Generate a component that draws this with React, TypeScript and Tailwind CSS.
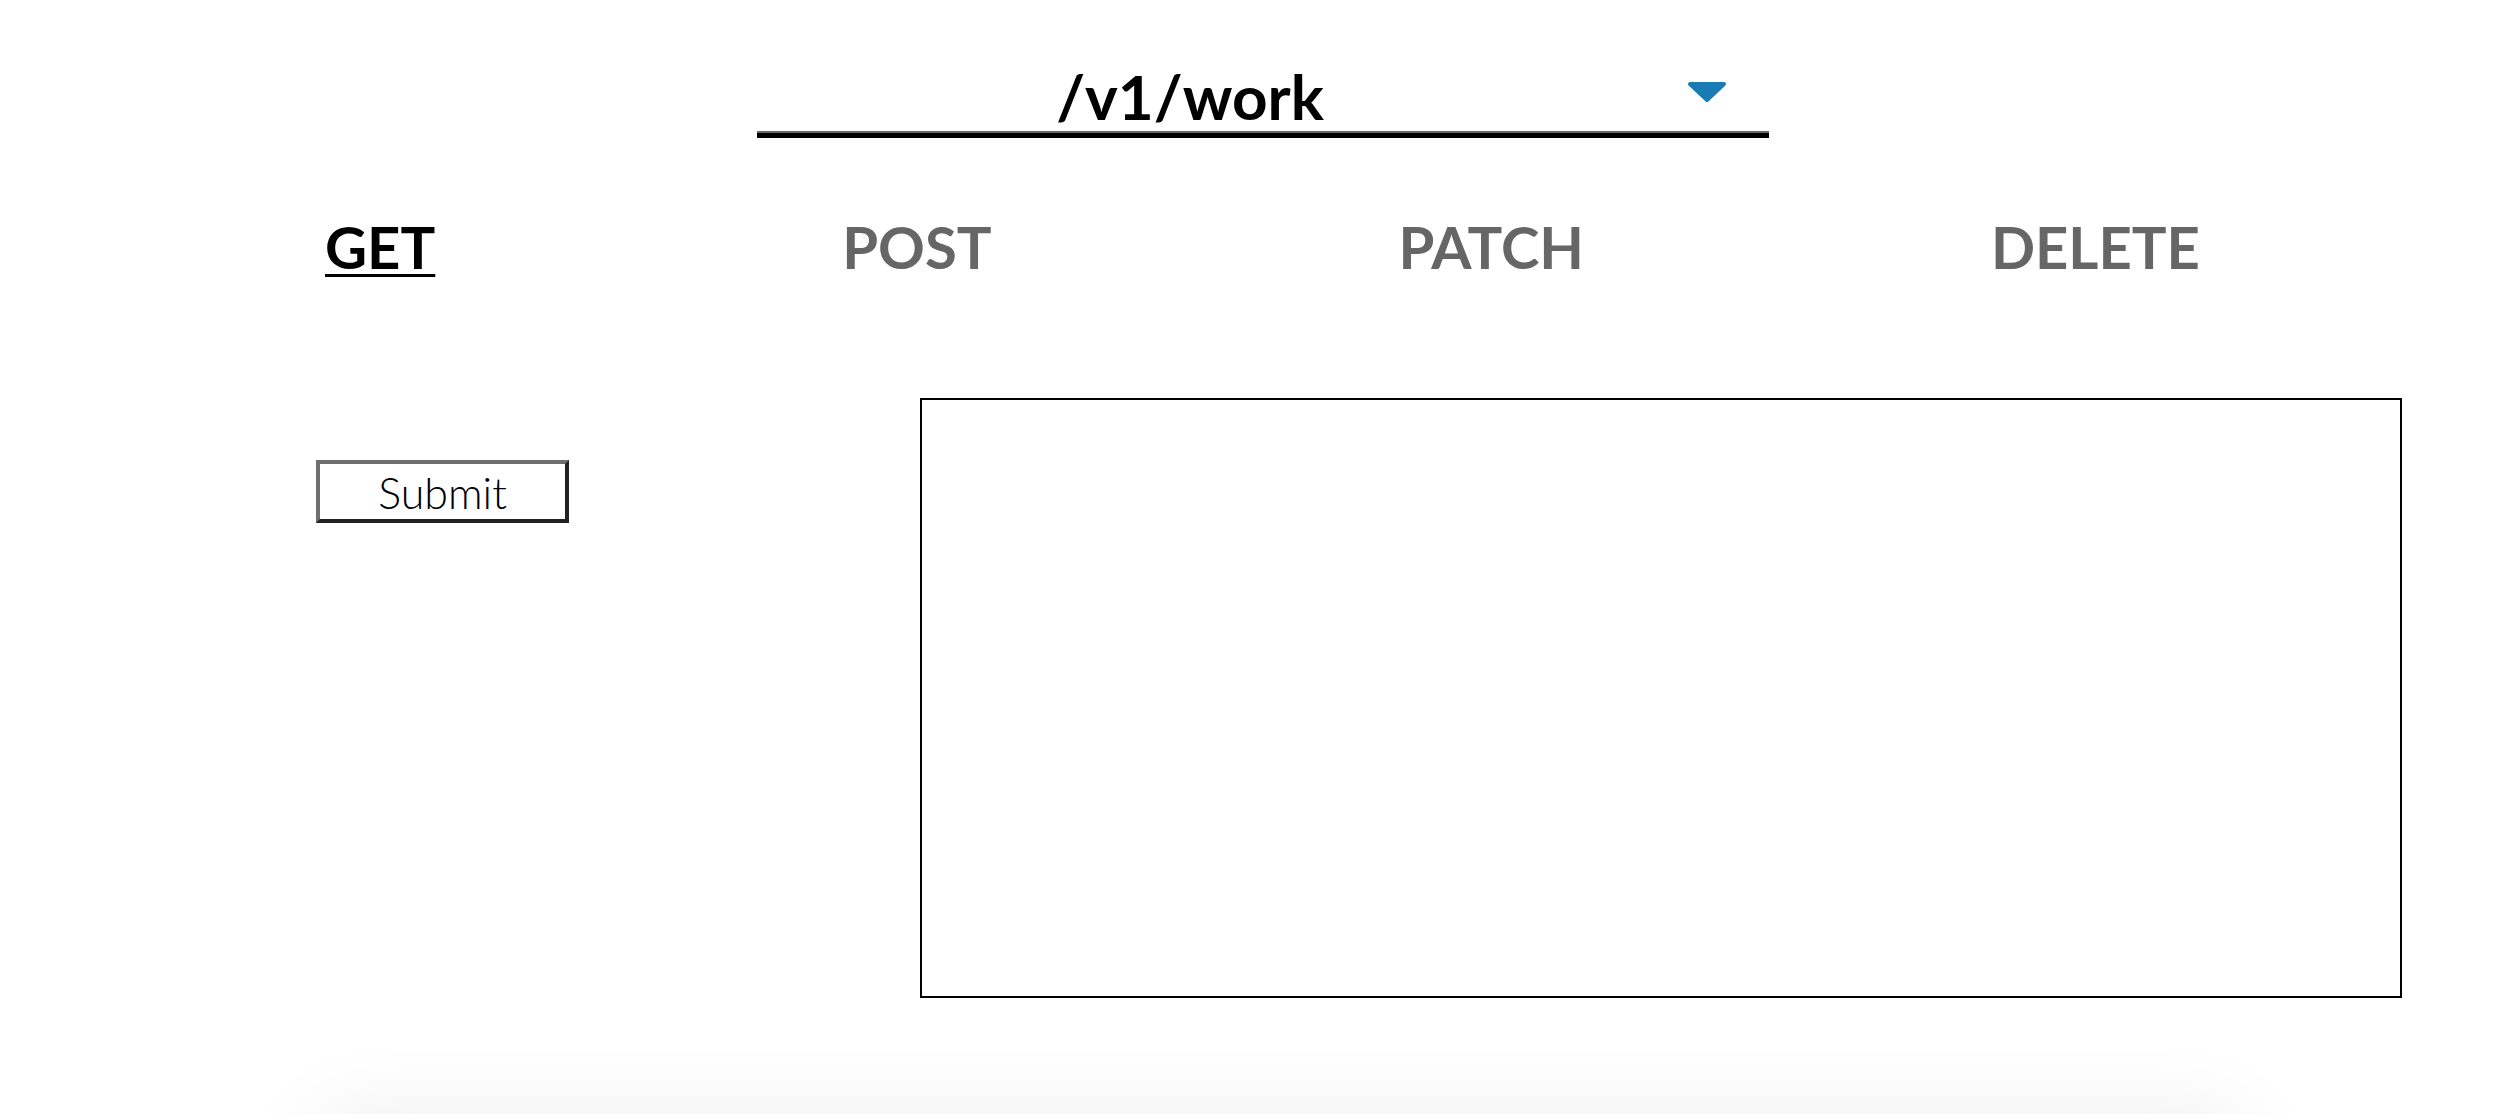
import React from 'react'

const methods = ['GET', 'POST', 'PATCH', 'DELETE']

function CaretDown() {
  return (
    <svg width="40" height="22" viewBox="0 0 40 22" fill="#187bb3">
      <polygon points="3,3 37,3 20,19" stroke="#187bb3" strokeWidth="4" strokeLinejoin="round" />
    </svg>
  )
}

export default function App() {
  const active = 'GET'

  return (
    <div className="relative h-[1114px] overflow-hidden bg-white font-['Lato',sans-serif]">
      {/* endpoint picker */}
      <div className="relative ml-[757px] mt-[66px] w-[1012px]">
        <div className="h-[64px] pr-[146px] text-center text-[62px] font-bold leading-[60px] text-black">/v1/work</div>
        <div className="mt-[1px] h-[2px] bg-[#6a6a6a]" />
        <div className="h-[5px] bg-black" />
        <div className="absolute right-[42px] top-[15px]">
          <CaretDown />
        </div>
      </div>

      {/* method tabs */}
      <div className="ml-[325px] mt-[80px] flex w-[1875px] justify-between">
        {methods.map((m) => (
          <span
            key={m}
            className={
              m === active
                ? 'text-[58px] font-bold leading-none text-black underline decoration-[3px] underline-offset-[5px]'
                : 'text-[58px] font-bold leading-none text-[#666666]'
            }
          >
            {m}
          </span>
        ))}
      </div>

      {/* request body + response */}
      <div className="mt-[122px] flex">
        <div className="w-[920px] shrink-0 pl-[316px] pt-[62px]">
          <button className="flex h-[63px] w-[253px] items-center justify-center border-4 border-t-[#6e6e6e] border-l-[#6e6e6e] border-b-[#222] border-r-[#222] bg-white pt-[2px] text-[43px] font-light leading-none text-black">
            Submit
          </button>
        </div>
        <div className="h-[600px] w-[1482px] shrink-0 border-2 border-black" />
      </div>

      {/* next card peeking in from below */}
      <div className="ml-[320px] mt-[121px] h-[400px] w-[1920px] bg-white shadow-[0_0_80px_rgba(0,0,0,0.08)]" />
    </div>
  )
}
